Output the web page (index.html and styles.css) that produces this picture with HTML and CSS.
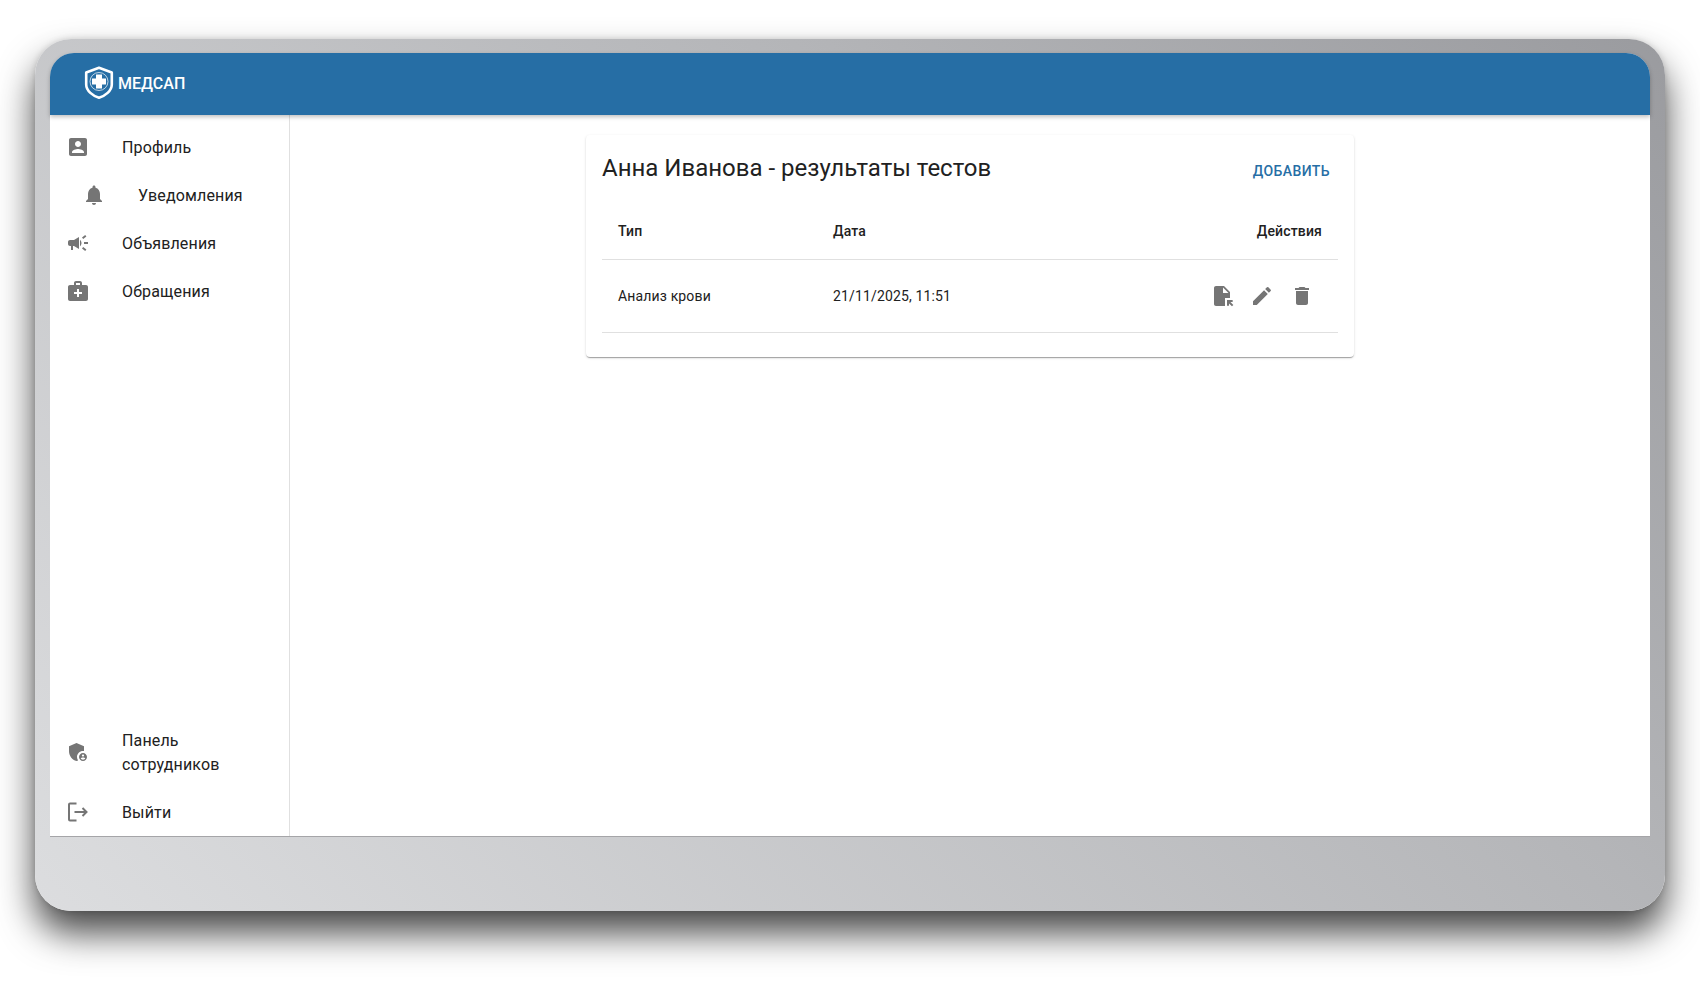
FILE: index.html
```html
<!DOCTYPE html>
<html lang="ru">
<head>
<meta charset="utf-8">
<title>МЕДСАП</title>
<link rel="stylesheet" href="styles.css">
</head>
<body>
<div class="frame">
  <div class="screen">
    <header class="topbar">
      <svg class="logo" viewBox="0 0 30 34">
        <path class="logo-shield" d="M15 1.800 27.800 6.500V18.500C27.800 25 21 29.800 15 31.800 9 29.800 2.200 25 2.200 18.500V6.500Z"/>
        <circle class="logo-ring" cx="15" cy="15.500" r="9"/>
        <path class="logo-cross" d="M12 8.500h6v4h4v6h-4v4h-6v-4H8v-6h4Z"/>
      </svg>
      <span class="brand">МЕДСАП</span>
    </header>
    <div class="body">
      <nav class="sidebar">
        <div class="nav-group">
          <a class="nav-item">
            <span class="nav-icon"><svg class="icon" viewBox="0 0 24 24"><path d="M3 5v14c0 1.100.89 2 2 2h14c1.100 0 2-.9 2-2V5c0-1.100-.9-2-2-2H5c-1.110 0-2 .9-2 2zm12 4c0 1.660-1.340 3-3 3s-3-1.340-3-3 1.340-3 3-3 3 1.340 3 3zm-9 8c0-2 4-3.100 6-3.100s6 1.100 6 3.100v1H6v-1z"/></svg></span>
            <span class="nav-label">Профиль</span>
          </a>
          <a class="nav-item nav-item-nested">
            <span class="nav-icon"><svg class="icon" viewBox="0 0 24 24"><path d="M12 22c1.100 0 2-.9 2-2h-4c0 1.100.89 2 2 2zm6-6v-5c0-3.070-1.640-5.640-4.500-6.320V4c0-.83-.67-1.500-1.500-1.500s-1.500.67-1.500 1.500v.68C7.630 5.360 6 7.920 6 11v5l-2 2v1h16v-1l-2-2z"/></svg></span>
            <span class="nav-label">Уведомления</span>
          </a>
          <a class="nav-item">
            <span class="nav-icon"><svg class="icon" viewBox="0 0 24 24"><path d="M18 11v2h4v-2h-4zm-2 6.610c.96.71 2.210 1.650 3.200 2.390.4-.53.8-1.070 1.200-1.600-.99-.74-2.240-1.680-3.200-2.400-.4.54-.8 1.080-1.200 1.610zM20.400 5.600c-.4-.53-.8-1.070-1.200-1.600-.99.74-2.240 1.680-3.200 2.400.4.53.8 1.070 1.200 1.600.96-.72 2.210-1.650 3.200-2.400zM4 9c-1.100 0-2 .9-2 2v2c0 1.100.9 2 2 2h1v4h2v-4h1l5 3V6L8 9H4zm11.500 3c0-1.330-.58-2.530-1.500-3.350v6.690c.92-.81 1.500-2.010 1.500-3.340z"/></svg></span>
            <span class="nav-label">Объявления</span>
          </a>
          <a class="nav-item">
            <span class="nav-icon"><svg class="icon" viewBox="0 0 24 24"><path d="M20 6h-4V4c0-1.100-.9-2-2-2h-4c-1.100 0-2 .9-2 2v2H4c-1.100 0-2 .9-2 2v12c0 1.100.9 2 2 2h16c1.100 0 2-.9 2-2V8c0-1.100-.9-2-2-2zM10 4h4v2h-4V4zm6 11h-3v3h-2v-3H8v-2h3v-3h2v3h3v2z"/></svg></span>
            <span class="nav-label">Обращения</span>
          </a>
        </div>
        <div class="nav-group">
          <a class="nav-item">
            <span class="nav-icon"><svg class="icon" viewBox="0 0 24 24"><path d="M17 11c.34 0 .67.04 1 .09V6.270L10.500 3 3 6.270v4.910c0 4.540 3.200 8.790 7.500 9.820.55-.13 1.080-.32 1.600-.55-.69-.98-1.100-2.170-1.100-3.450 0-3.310 2.690-6 6-6z"/><path d="M17 13c-2.210 0-4 1.790-4 4s1.790 4 4 4 4-1.790 4-4-1.790-4-4-4zm0 1.380c.62 0 1.120.51 1.120 1.120s-.51 1.120-1.120 1.120-1.120-.51-1.120-1.120.5-1.120 1.120-1.120zm0 5.370c-.93 0-1.740-.46-2.240-1.170.05-.72 1.510-1.080 2.240-1.080s2.190.36 2.240 1.080c-.5.71-1.310 1.170-2.240 1.170z"/></svg></span>
            <span class="nav-label">Панель сотрудников</span>
          </a>
          <a class="nav-item">
            <span class="nav-icon"><svg class="icon icon-line" viewBox="0 0 24 24"><path d="M10.500 3.500H4A1 1 0 0 0 3 4.500v15A1 1 0 0 0 4 20.500h6.500M8.500 12H20.500M16.500 8l4 4-4 4"/></svg></span>
            <span class="nav-label">Выйти</span>
          </a>
        </div>
      </nav>
      <main class="content">
        <section class="card">
          <div class="card-head">
            <h1 class="card-title">Анна Иванова - результаты тестов</h1>
            <button class="add-btn">Добавить</button>
          </div>
          <table class="table">
            <thead>
              <tr><th class="col-type">Тип</th><th>Дата</th><th class="col-actions">Действия</th></tr>
            </thead>
            <tbody>
              <tr>
                <td>Анализ крови</td>
                <td>21/11/2025, 11:51</td>
                <td class="cell-actions">
                  <div class="actions">
                    <span class="icon-btn"><svg class="icon" viewBox="0 0 24 24"><path d="M14 2H6c-1.100 0-1.990.9-1.990 2L4 20c0 1.100.89 2 1.990 2H15v-8h5V8l-6-6zm-1 7V3.500L18.500 9H13zm4 12.660V16h5.660v2h-2.240l2.950 2.950-1.410 1.410L19 19.410v2.240h-2z"/></svg></span>
                    <span class="icon-btn"><svg class="icon" viewBox="0 0 24 24"><path d="M3 17.250V21h3.750L17.810 9.940l-3.750-3.750L3 17.250zM20.710 7.040c.39-.39.39-1.020 0-1.410l-2.340-2.340a.9959.9959 0 0 0-1.410 0l-1.830 1.830 3.750 3.750 1.830-1.830z"/></svg></span>
                    <span class="icon-btn"><svg class="icon" viewBox="0 0 24 24"><path d="M6 19c0 1.100.9 2 2 2h8c1.100 0 2-.9 2-2V7H6v12zM19 4h-3.500l-1-1h-5l-1 1H5v2h14V4z"/></svg></span>
                  </div>
                </td>
              </tr>
            </tbody>
          </table>
        </section>
      </main>
    </div>
  </div>
</div>
</body>
</html>
```
FILE: styles.css
```css
* { box-sizing: border-box; }
html, body { margin: 0; height: 100%; background: #fff; overflow: hidden; }
body { font-family: Roboto, "Liberation Sans", sans-serif; color: #212121; padding: 39px 35px 0; }

.frame {
  width: 1630px;
  height: 872px;
  padding: 14px 15px 74px;
  border-radius: 36px;
  background: linear-gradient(45deg, #dcdddf 0%, #b4b5b8 65%, #9a9b9f 100%);
  box-shadow: 0 22px 36px rgba(0, 0, 0, .72), 0 0 6px rgba(0, 0, 0, .15);
}
.screen {
  height: 100%;
  display: flex;
  flex-direction: column;
  background: #fff;
  border-radius: 24px 24px 0 0;
  border-bottom: 1px solid #a5a5a8;
}
.topbar {
  flex: none;
  height: 62px;
  display: flex;
  align-items: center;
  gap: 4px;
  padding: 0 0 2px 34px;
  background: #266ea5;
  border-radius: 24px 24px 0 0;
  box-shadow: 0 2px 4px rgba(0, 0, 0, .25);
  position: relative;
}
.logo { width: 30px; height: 34px; display: block; }
.logo-shield { fill: none; stroke: #fff; stroke-width: 2.6; stroke-linejoin: round; }
.logo-ring { fill: none; stroke: #fff; stroke-width: 1; stroke-opacity: .7; }
.logo-cross { fill: #fff; }
.brand { font-size: 16px; font-weight: 500; color: #fff; }

.body { flex: 1; min-height: 0; display: flex; }
.sidebar {
  flex: none;
  width: 240px;
  border-right: 1px solid #e0e0e0;
  padding-top: 8px;
  display: flex;
  flex-direction: column;
  justify-content: space-between;
}
.nav-item {
  display: flex;
  align-items: center;
  padding: 8px 16px;
  font-size: 16px;
  line-height: 24px;
  letter-spacing: .15px;
  min-height: 48px;
}
.nav-item-nested { padding-left: 32px; }
.nav-icon { flex: none; width: 56px; height: 24px; }
.nav-label { flex: 1; margin: 3px 0; padding: 2px 32px 0 0; }

.icon { width: 24px; height: 24px; display: block; fill: #757575; }
.icon-line { fill: none; stroke: #757575; stroke-width: 2; }

.content { flex: 1; min-width: 0; display: flex; justify-content: center; align-items: flex-start; padding: 20px 0 0; }
.card {
  width: 768px;
  padding: 16px 16px 24px;
  background: #fff;
  border-radius: 4px;
  box-shadow: 0 2px 1px -1px rgba(0,0,0,.2), 0 1px 1px rgba(0,0,0,.14), 0 1px 3px rgba(0,0,0,.12);
}
.card-head { display: flex; justify-content: space-between; align-items: flex-start; height: 52px; }
.card-title { margin: 0; padding-top: 1px; font-size: 24px; font-weight: 400; line-height: 32px; }
.add-btn {
  border: 0;
  background: none;
  padding: 6px 8px;
  margin-top: 2px;
  font: 500 14px/24px Roboto, sans-serif;
  text-transform: uppercase;
  letter-spacing: .4px;
  color: #266ea5;
}
.table { width: 100%; border-collapse: collapse; font-size: 14px; line-height: 24px; letter-spacing: .15px; }
.table th { font-weight: 500; text-align: left; padding: 16px; border-bottom: 1px solid #e0e0e0; }
.table td { padding: 16px; border-bottom: 1px solid #e0e0e0; height: 73px; }
.col-type { width: 215px; }
.table .col-actions { text-align: right; }
.actions { display: flex; justify-content: flex-end; }
.icon-btn { width: 40px; height: 40px; padding: 8px; }
```
